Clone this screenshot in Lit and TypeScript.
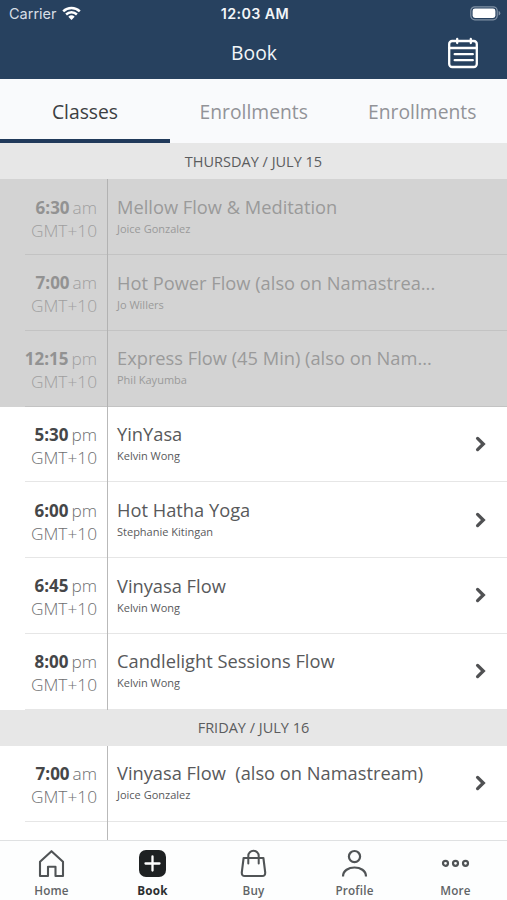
import { LitElement, html, css, svg, nothing } from "lit";
import { customElement, property } from "lit/decorators.js";
import { classMap } from "lit/directives/class-map.js";

interface ClassItem {
  time: string;
  half: string;
  title: string;
  teacher: string;
  past?: boolean;
}

const THURSDAY: ClassItem[] = [
  { time: "6:30", half: "am", title: "Mellow Flow & Meditation", teacher: "Joice Gonzalez", past: true },
  { time: "7:00", half: "am", title: "Hot Power Flow (also on Namastrea...", teacher: "Jo Willers", past: true },
  { time: "12:15", half: "pm", title: "Express Flow (45 Min) (also on Nam...", teacher: "Phil Kayumba", past: true },
  { time: "5:30", half: "pm", title: "YinYasa", teacher: "Kelvin Wong" },
  { time: "6:00", half: "pm", title: "Hot Hatha Yoga", teacher: "Stephanie Kitingan" },
  { time: "6:45", half: "pm", title: "Vinyasa Flow", teacher: "Kelvin Wong" },
  { time: "8:00", half: "pm", title: "Candlelight Sessions Flow", teacher: "Kelvin Wong" },
];

const FRIDAY: ClassItem[] = [
  { time: "7:00", half: "am", title: "Vinyasa Flow\u00a0 (also on Namastream)", teacher: "Joice Gonzalez" },
];

const ICONS = {
  home: svg`<path d="M3 12.8 14.5 2.2 26 12.8V27H18.5V17.8H11V27H3Z" fill="none" stroke="#505456" stroke-width="2.1" stroke-linejoin="round"/>`,
  book: svg`<rect x="1" y="1" width="27" height="27" rx="7" fill="#1e2122"/><path d="M14.5 7.5v14M7.5 14.5h14" stroke="#fff" stroke-width="2.3" stroke-linecap="round"/>`,
  buy: svg`<path d="M4.6 9H24.4L26.2 23.400Q26.400 27 23.200 27H5.800Q2.600 27 2.800 23.400Z" fill="none" stroke="#505456" stroke-width="2.1" stroke-linejoin="round"/><path d="M9.300 14.500V7a5.200 5.200 0 0 1 10.400 0v7.500" fill="none" stroke="#505456" stroke-width="2" stroke-linecap="round"/>`,
  profile: svg`<circle cx="14.500" cy="7.600" r="5.600" fill="none" stroke="#505456" stroke-width="2.200"/><path d="M3 27.500C3 15.500 26 15.500 26 27.500" fill="none" stroke="#505456" stroke-width="2.200"/>`,
  more: svg`<g fill="none" stroke="#505456" stroke-width="2.200"><circle cx="4.500" cy="14.300" r="2.500"/><circle cx="14.500" cy="14.300" r="2.500"/><circle cx="24.500" cy="14.300" r="2.500"/></g>`,
};

@customElement("class-row")
export class ClassRow extends LitElement {
  @property({ attribute: false }) item!: ClassItem;

  static styles = css`
    :host {
      display: block;
      height: 75.75px;
    }
    .row {
      display: flex;
      height: 100%;
      background: #fff;
      color: #58595b;
    }
    .when {
      box-sizing: border-box;
      width: 107.5px;
      flex: none;
      border-right: 1.5px solid #b9b9b9;
      padding: 16.250px 9.500px 0 0;
      text-align: right;
      font-size: 17.300px;
      line-height: 23px;
      font-weight: 300;
      color: #6e6f71;
      white-space: nowrap;
      background: linear-gradient(#e6e6e6, #e6e6e6) 25px 100% / 100% 1px no-repeat;
    }
    .time {
      font-size: 17px;
      font-weight: 700;
      color: #454648;
      margin-right: 3px;
    }
    .what {
      flex: 1;
      display: flex;
      justify-content: space-between;
      align-items: center;
      border-bottom: 1px solid #e6e6e6;
      padding: 0 20px 0 9.500px;
    }
    .text {
      align-self: flex-start;
      padding-top: 14.500px;
      white-space: nowrap;
    }
    .title {
      font-size: 18.280px;
      line-height: 25px;
    }
    .teacher {
      font-size: 11px;
      line-height: 15px;
      margin-top: 2px;
    }
    .chevron {
      width: 13px;
      height: 18px;
      flex: none;
    }
    .past {
      background: #d3d3d3;
      color: #9a9a9a;
    }
    .past .when {
      color: #9f9f9f;
      border-color: #b2b2b2;
      background-image: linear-gradient(#c3c3c3, #c3c3c3);
    }
    .past .time {
      color: #929292;
    }
    .past .what {
      border-color: #c3c3c3;
    }
  `;

  render() {
    const c = this.item;
    return html`<div class=${classMap({ row: true, past: !!c.past })}>
      <div class="when">
        <div><span class="time">${c.time}</span>${c.half}</div>
        <div class="zone">GMT+10</div>
      </div>
      <div class="what">
        <div class="text">
          <div class="title">${c.title}</div>
          <div class="teacher">${c.teacher}</div>
        </div>
        ${c.past
          ? nothing
          : html`<svg class="chevron" viewBox="0 0 13 18">
              <path d="M3.600 3.400 9.300 9 3.600 14.600" fill="none" stroke="#505153" stroke-width="3.300" stroke-linecap="round" />
            </svg>`}
      </div>
    </div>`;
  }
}

@customElement("app-root")
export class AppRoot extends LitElement {
  static styles = css`
    :host {
      display: flex;
      flex-direction: column;
      height: 900px;
      width: 507px;
      overflow: hidden;
      background: #fff;
      font-family: "Open Sans", "Noto Sans", sans-serif;
    }
    .top {
      flex: none;
      height: 79px;
      background: #27415f;
      color: #f2f5f8;
    }
    .status {
      display: grid;
      grid-template-columns: 1fr auto 1fr;
      align-items: center;
      height: 27px;
      padding: 0 6px 0 9px;
      font-family: Inter, sans-serif;
      font-size: 14.500px;
    }
    .carrier {
      display: flex;
      align-items: center;
      gap: 5px;
      color: #d7dee6;
    }
    .wifi {
      width: 19px;
      height: 15px;
    }
    .clock {
      font-weight: 600;
      font-size: 14.300px;
      letter-spacing: 0.400px;
    }
    .battery {
      width: 31px;
      height: 15px;
      justify-self: end;
    }
    .nav {
      display: grid;
      grid-template-columns: 1fr auto 1fr;
      align-items: center;
      height: 52px;
      padding: 0 27px 0 28px;
    }
    .heading {
      grid-column: 2;
      font-size: 19.300px;
      line-height: 28px;
    }
    .calendar {
      width: 34px;
      height: 34px;
      justify-self: end;
    }
    .tabs {
      flex: none;
      display: grid;
      grid-template-columns: 170px 167.500px 1fr;
      height: 64px;
      background: #f9fafc;
    }
    .tab {
      display: flex;
      align-items: center;
      justify-content: center;
      box-sizing: border-box;
      padding-top: 4px;
      border-bottom: 4px solid transparent;
      font-size: 19.300px;
      color: #929398;
    }
    .tab.on {
      color: #3c3e42;
      border-color: #213a5b;
    }
    .list {
      flex: 1;
      min-height: 0;
      overflow: hidden;
    }
    .day {
      display: flex;
      align-items: center;
      justify-content: center;
      height: 36.250px;
      background: #e7e7e7;
      color: #5b5c5e;
      font-size: 14.500px;
    }
    .stub {
      box-sizing: border-box;
      height: 20px;
      width: 107.500px;
      border-right: 1.500px solid #b9b9b9;
    }
    .bar {
      flex: none;
      display: grid;
      grid-template-columns: repeat(5, 101px);
      justify-content: center;
      box-sizing: border-box;
      height: 60px;
      border-top: 1px solid #dfe1e2;
      background: #fdfefe;
    }
    .dest {
      display: flex;
      flex-direction: column;
      align-items: center;
      padding-top: 8px;
      font-size: 11.700px;
      line-height: 16px;
      font-weight: 600;
      letter-spacing: 0.200px;
      color: #616466;
    }
    .dest.on {
      color: #2c2f30;
      font-weight: 700;
    }
    .icon {
      width: 29px;
      height: 29px;
      margin-bottom: 4px;
    }
  `;

  private dest(name: keyof typeof ICONS, label: string) {
    return html`<div class=${classMap({ dest: true, on: name === "book" })}>
      <svg class="icon" viewBox="0 0 29 29">${ICONS[name]}</svg>
      <span>${label}</span>
    </div>`;
  }

  render() {
    return html`
      <header class="top">
        <div class="status">
          <div class="carrier">
            <span>Carrier</span>
            <svg class="wifi" viewBox="0 0 19 15">
              <path d="M1.200 5.400a12 12 0 0 1 16.600 0M4.100 8.500a7.800 7.800 0 0 1 10.800 0" fill="none" stroke="#fff" stroke-width="2.500" />
              <path d="M9.500 14 6.300 10.800a4.700 4.700 0 0 1 6.400 0Z" fill="#fff" />
            </svg>
          </div>
          <span class="clock">12:03 AM</span>
          <svg class="battery" viewBox="0 0 31 15">
            <rect x=".8" y=".8" width="26.400" height="13" rx="4" fill="none" stroke="#8091a5" stroke-width="1.200" />
            <rect x="2.600" y="2.600" width="22.800" height="9.400" rx="2.400" fill="#fff" />
            <path d="M28.600 5v4.600q1.700-.6 1.700-2.300T28.600 5Z" fill="#8091a5" />
          </svg>
        </div>
        <div class="nav">
          <span class="heading">Book</span>
          <svg class="calendar" viewBox="0 0 34 34">
            <g fill="none" stroke="#fff" stroke-width="2.300" stroke-linecap="round">
              <rect x="3.200" y="5" width="27.600" height="26" rx="3" />
              <path d="M3.200 12H30.800M11.200 3v4M24.800 3v4M8.700 18.200H26.800M8.700 24.200H26.800" />
            </g>
          </svg>
        </div>
      </header>
      <nav class="tabs">
        <div class="tab on">Classes</div>
        <div class="tab">Enrollments</div>
        <div class="tab">Enrollments</div>
      </nav>
      <main class="list">
        <div class="day">THURSDAY / JULY 15</div>
        ${THURSDAY.map((c) => html`<class-row .item=${c}></class-row>`)}
        <div class="day">FRIDAY / JULY 16</div>
        ${FRIDAY.map((c) => html`<class-row .item=${c}></class-row>`)}
        <div class="stub"></div>
      </main>
      <footer class="bar">
        ${this.dest("home", "Home")} ${this.dest("book", "Book")} ${this.dest("buy", "Buy")}
        ${this.dest("profile", "Profile")} ${this.dest("more", "More")}
      </footer>
    `;
  }
}
